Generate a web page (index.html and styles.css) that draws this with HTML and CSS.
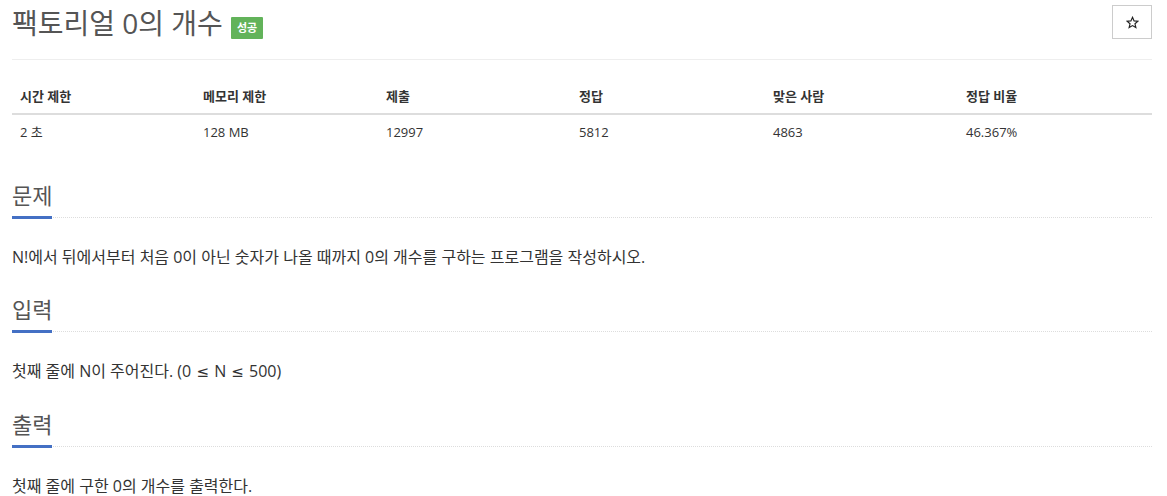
FILE: index.html
```html
<!DOCTYPE html>
<html lang="ko">
<head>
<meta charset="utf-8">
<link rel="stylesheet" href="styles.css">
</head>
<body>
<div class="page">
  <div class="title-row">
    <h1 class="title">팩토리얼 0의 개수</h1>
    <span class="badge">성공</span>
    <button class="star-btn" type="button">
      <svg width="13" height="13" viewBox="0 0 24 24"><path d="M12 2.5l2.9 6.6 7.1.6-5.4 4.7 1.6 7-6.2-3.7-6.2 3.7 1.6-7L2 9.7l7.1-.6z" fill="none" stroke="#222" stroke-width="2.2" stroke-linejoin="miter"/></svg>
    </button>
  </div>

  <table class="info">
    <colgroup>
      <col class="c1"><col class="c2"><col class="c3"><col class="c4"><col class="c5"><col class="c6">
    </colgroup>
    <thead>
      <tr><th>시간 제한</th><th>메모리 제한</th><th>제출</th><th>정답</th><th>맞은 사람</th><th>정답 비율</th></tr>
    </thead>
    <tbody>
      <tr><td>2 초</td><td>128 MB</td><td>12997</td><td>5812</td><td>4863</td><td>46.367%</td></tr>
    </tbody>
  </table>

  <section class="sec">
    <div class="headline"><h2>문제</h2></div>
    <p>N!에서 뒤에서부터 처음 0이 아닌 숫자가 나올 때까지 0의 개수를 구하는 프로그램을 작성하시오.</p>
  </section>
  <section class="sec">
    <div class="headline"><h2>입력</h2></div>
    <p>첫째 줄에 N이 주어진다. (0 <span class="op">≤</span> N <span class="op">≤</span> 500)</p>
  </section>
  <section class="sec">
    <div class="headline"><h2>출력</h2></div>
    <p>첫째 줄에 구한 0의 개수를 출력한다.</p>
  </section>
</div>
</body>
</html>
```

FILE: styles.css
```css
html, body {
  margin: 0;
  padding: 0;
  background: #fff;
}
body {
  font-family: "Open Sans", "Noto Sans CJK KR", sans-serif;
  color: #333;
}
.page {
  padding: 0 15px 0 12px;
}
.title-row {
  display: flex;
  align-items: flex-start;
  padding-top: 5px;
  padding-bottom: 18px;
  border-bottom: 1px solid #eee;
}
.title {
  margin: 0;
  font-size: 28px;
  line-height: 36px;
  font-weight: 400;
  color: #555;
}
.badge {
  margin-left: 8px;
  margin-top: 12px;
  background: #62b35a;
  color: #fff;
  font-size: 11px;
  font-weight: 700;
  line-height: 12px;
  padding: 5px 6px;
  border-radius: 1px;
}
.star-btn {
  margin-left: auto;
  width: 40px;
  height: 34px;
  border: 1px solid #ccc;
  background: #fff;
  display: flex;
  align-items: center;
  justify-content: center;
  padding: 0;
}
.info {
  margin-top: 19px;
  width: 1140px;
  border-collapse: collapse;
  table-layout: fixed;
  font-size: 13px;
  color: #333;
}
.c1, .c2 { width: 183px; }
.c3, .c5 { width: 193px; }
.c4, .c6 { width: 194px; }
.info th, .info td {
  text-align: left;
  padding: 8px;
  line-height: 18px;
}
.info th {
  font-weight: 700;
  border-bottom: 2px solid #ddd;
}
.sec {
  margin-top: 31px;
}
.sec + .sec {
  margin-top: 25px;
}
.headline {
  border-bottom: 1px dotted #ddd;
}
.headline h2 {
  display: inline-block;
  margin: 0 0 -2px 0;
  font-size: 22px;
  line-height: 30px;
  font-weight: 400;
  color: #555;
  padding-bottom: 6px;
  border-bottom: 3px solid #4470c4;
}
.sec p {
  margin: 27px 0 0 0;
  font-size: 16px;
  line-height: 24px;
  color: #333;
}
.op {
  font-family: "DejaVu Sans", sans-serif;
  font-size: 15px;
  padding: 0 1px;
}
```
